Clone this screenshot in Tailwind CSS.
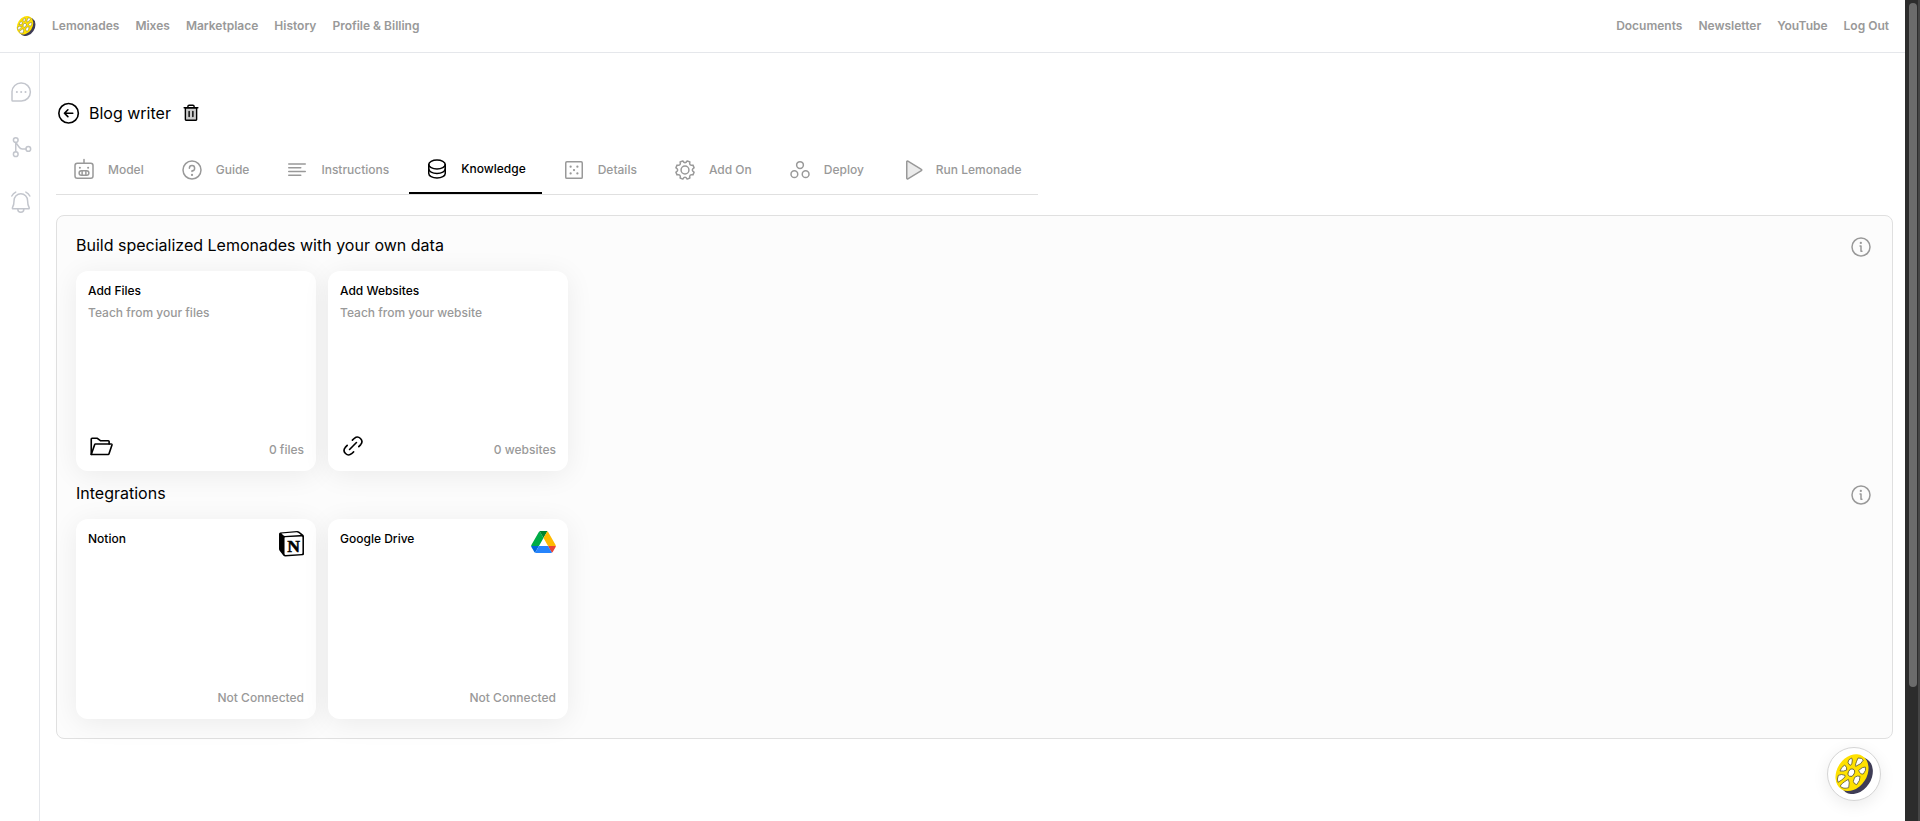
<!DOCTYPE html>
<html lang="en">
<head>
    <meta charset="UTF-8">
    <meta name="viewport" content="width=device-width, initial-scale=1.0">
    <title>Blog writer - Knowledge</title>
    <script src="https://cdn.jsdelivr.net/npm/@tailwindcss/browser@4"></script>
</head>
<body class="flex min-h-screen bg-white font-['Inter',sans-serif] text-xs font-medium text-black">
    <!-- Shared icons -->
    <svg class="hidden">
        <symbol id="lemon" viewBox="162 342 120 120">
            <ellipse cx="229" cy="407" rx="45" ry="59" transform="rotate(33 229 407)" fill="#3f3d56"/>
            <ellipse cx="216" cy="398" rx="45" ry="59" transform="rotate(33 216 398)" fill="#ffe100"/>
            <g fill="#fff" stroke="#5f5a30" stroke-width="2.5" stroke-linejoin="round">
                <ellipse cx="214" cy="398" rx="9" ry="12" transform="rotate(25 214 398)"/>
                <path d="M215 354Q204 358 204 367Q206 375 212 376Q217 372 217 360Z"/>
                <path d="M234 354Q246 353 250 360Q246 372 227 379Q224 376 234 354Z"/>
                <path d="M236 391Q248 380 256 381Q260 390 250 402Q240 404 236 391Z"/>
                <path d="M224 412Q232 406 240 409Q241 422 230 434Q221 432 220 424Z"/>
                <path d="M205 418Q210 426 206 443Q190 448 181 439Q181 432 205 418Z"/>
                <path d="M175 406Q184 401 195 406Q198 413 174 427Q170 418 175 406Z"/>
                <path d="M194 375Q202 382 200 390Q191 395 180 393Q183 382 194 375Z"/>
            </g>
        </symbol>
        <symbol id="info" viewBox="0 0 256 256">
            <g fill="none" stroke="currentColor" stroke-width="16" stroke-linecap="round" stroke-linejoin="round">
                <circle cx="128" cy="128" r="96"/>
                <path d="M118 118h10v56h10"/>
            </g>
            <circle cx="126" cy="84" r="12" fill="currentColor"/>
        </symbol>
    </svg>

    <div class="flex min-w-0 flex-1 flex-col">
        <header class="flex h-[53px] items-center justify-between border-b border-gray-200 px-4 font-semibold text-[#999]">
            <nav class="flex items-center gap-4">
                <a href="#" aria-label="Home"><svg class="size-5"><use href="#lemon"/></svg></a>
                <a href="#">Lemonades</a>
                <a href="#">Mixes</a>
                <a href="#">Marketplace</a>
                <a href="#">History</a>
                <a href="#">Profile &amp; Billing</a>
            </nav>
            <nav class="flex items-center gap-4">
                <a href="#">Documents</a>
                <a href="#">Newsletter</a>
                <a href="#">YouTube</a>
                <a href="#">Log Out</a>
            </nav>
        </header>

        <div class="flex flex-1">
            <aside class="flex w-10 shrink-0 flex-col gap-[31px] border-r border-gray-200 pt-[27px] pl-[9px] text-[#c3c6cd]">
                <a href="#" aria-label="Chats">
                    <svg class="size-6" viewBox="0 0 256 256" fill="none" stroke="currentColor" stroke-width="16" stroke-linecap="round" stroke-linejoin="round">
                        <path d="M132 224H40a8 8 0 0 1-8-8V124a96 96 0 0 1 96-92h4a96 96 0 0 1 0 192Z"/>
                        <path d="M84 128h.1M130 128h.1M176 128h.1" stroke-width="22"/>
                    </svg>
                </a>
                <a href="#" aria-label="Flows">
                    <svg class="size-6" viewBox="0 0 256 256" fill="none" stroke="currentColor" stroke-width="16" stroke-linecap="round" stroke-linejoin="round">
                        <circle cx="72" cy="54" r="25"/>
                        <circle cx="72" cy="204" r="25"/>
                        <circle cx="206" cy="148" r="25"/>
                        <path d="M72 79v100M72 79l37 52q12 17 32 17h40"/>
                    </svg>
                </a>
                <a href="#" aria-label="Notifications">
                    <svg class="size-6" viewBox="0 0 256 256" fill="none" stroke="currentColor" stroke-width="16" stroke-linecap="round" stroke-linejoin="round">
                        <path d="M54 112a72 72 0 0 1 144 0c0 38 9 61 17 75 3 5 0 13-7 13H44c-7 0-10-8-7-13 8-14 17-37 17-75Z"/>
                        <path d="M94 200v4a32 32 0 0 0 64 0v-4M180 22a96 96 0 0 1 42 42M30 64a96 96 0 0 1 42-42"/>
                    </svg>
                </a>
            </aside>

            <main class="min-w-0 flex-1 pt-12 pr-3 pb-20 pl-4">
                <div class="flex h-6 items-center">
                    <a href="#" aria-label="Back">
                        <svg class="size-[26px]" viewBox="0 0 256 256" fill="none" stroke="currentColor" stroke-width="16" stroke-linecap="round" stroke-linejoin="round">
                            <circle cx="124" cy="130" r="96"/>
                            <path d="M117 96l-34 34 34 34M83 130h82"/>
                        </svg>
                    </a>
                    <h1 class="ml-[7px] text-base font-normal">Blog writer</h1>
                    <button type="button" aria-label="Delete" class="ml-2.5">
                        <svg class="size-5" viewBox="0 0 256 256" fill="none" stroke="currentColor" stroke-width="18" stroke-linecap="round" stroke-linejoin="round">
                            <path d="M200 60v152a8 8 0 0 1-8 8H64a8 8 0 0 1-8-8V60Z" fill="currentColor" fill-opacity=".2"/>
                            <path d="M216 60H40M104 108v64M152 108v64M168 60V44a16 16 0 0 0-16-16h-48a16 16 0 0 0-16 16v16"/>
                        </svg>
                    </button>
                </div>

                <!-- Tabs -->
                <nav class="mt-[21px] flex w-fit gap-1 border-b border-[#e0e0e0] text-[#999]">
                    <a href="#" class="flex h-12 items-center gap-3 px-4">
                        <svg class="size-6" viewBox="0 0 256 256" fill="none" stroke="currentColor" stroke-width="16" stroke-linecap="round" stroke-linejoin="round">
                            <rect x="32" y="56" width="192" height="160" rx="24"/>
                            <rect x="76" y="136" width="104" height="48" rx="24"/>
                            <path d="M128 56V16M108 138v44M148 138v44"/>
                            <path d="M84 104h.1M172 104h.1" stroke-width="22"/>
                        </svg>
                        Model
                    </a>
                    <a href="#" class="flex h-12 items-center gap-3 px-4">
                        <svg class="size-6" viewBox="0 0 256 256" fill="none" stroke="currentColor" stroke-width="16" stroke-linecap="round" stroke-linejoin="round">
                            <circle cx="128" cy="128" r="96"/>
                            <path d="M128 144v-8a28 28 0 1 0-28-28"/>
                            <path d="M128 180h.1" stroke-width="24"/>
                        </svg>
                        Guide
                    </a>
                    <a href="#" class="flex h-12 items-center gap-3 px-4">
                        <svg class="size-6" viewBox="0 0 256 256" fill="none" stroke="currentColor" stroke-width="16" stroke-linecap="round">
                            <path d="M40 64h176M40 104h128M40 144h176M40 184h128"/>
                        </svg>
                        Instructions
                    </a>
                    <a href="#" aria-current="page" class="flex h-12 items-center gap-3 border-b-2 border-black px-4 text-black">
                        <svg class="size-6" viewBox="0 0 256 256" fill="none" stroke="currentColor" stroke-width="16" stroke-linecap="round" stroke-linejoin="round">
                            <ellipse cx="128" cy="80" rx="88" ry="48"/>
                            <path d="M40 80v48c0 26 39 48 88 48s88-22 88-48V80"/>
                            <path d="M40 128v48c0 26 39 48 88 48s88-22 88-48v-48"/>
                        </svg>
                        Knowledge
                    </a>
                    <a href="#" class="flex h-12 items-center gap-3 px-4">
                        <svg class="size-6" viewBox="0 0 256 256" fill="none" stroke="currentColor" stroke-width="16" stroke-linecap="round">
                            <rect x="40" y="40" width="176" height="176" rx="12"/>
                            <path d="M92 92h.1M164 92h.1M128 128h.1M92 164h.1M164 164h.1" stroke-width="24"/>
                        </svg>
                        Details
                    </a>
                    <a href="#" class="flex h-12 items-center gap-3 px-4">
                        <svg class="size-6" viewBox="0 0 256 256" fill="none" stroke="currentColor" stroke-width="16" stroke-linejoin="round">
                            <circle cx="128" cy="128" r="42"/>
                            <path d="M225 151L213 180Q192 174 183 183Q174 192 180 213L151 225Q141 206 128 206Q115 206 105 225L76 213Q82 192 73 183Q64 174 43 180L31 151Q50 141 50 128Q50 115 31 105L43 76Q64 82 73 73Q82 64 76 43L105 31Q115 50 128 50Q141 50 151 31L180 43Q174 64 183 73Q192 82 213 76L225 105Q206 115 206 128Q206 141 225 151Z"/>
                        </svg>
                        Add On
                    </a>
                    <a href="#" class="flex h-12 items-center gap-3 px-4">
                        <svg class="size-6" viewBox="0 0 256 256" fill="none" stroke="currentColor" stroke-width="16">
                            <circle cx="128" cy="75" r="36"/>
                            <circle cx="68" cy="172" r="36"/>
                            <circle cx="188" cy="172" r="36"/>
                        </svg>
                        Deploy
                    </a>
                    <a href="#" class="flex h-12 items-center gap-3 px-4">
                        <svg class="size-6" viewBox="0 0 256 256" fill="none" stroke="currentColor" stroke-width="16" stroke-linejoin="round">
                            <path d="M72 40v176a8 8 0 0 0 12 6l144-87a8 8 0 0 0 0-14L84 33a8 8 0 0 0-12 7Z" fill="currentColor" fill-opacity=".2"/>
                        </svg>
                        Run Lemonade
                    </a>
                </nav>

                <!-- Knowledge sources -->
                <div class="mt-5 flex flex-col gap-3 rounded-lg border border-[#e0e0e0] bg-[#fcfcfc] p-[19px]">
                    <div class="flex items-start justify-between">
                        <h2 class="text-base leading-5 font-normal">Build specialized Lemonades with your own data</h2>
                        <button type="button" aria-label="About knowledge" class="text-[#999]"><svg class="size-6"><use href="#info"/></svg></button>
                    </div>
                    <div class="flex flex-wrap gap-3">
                        <a href="#" class="flex h-[200px] w-60 flex-col justify-between rounded-xl bg-white p-3 shadow-[0_4px_28px_rgba(0,0,0,0.07)]">
                            <div class="flex flex-col gap-1.5">
                                <h3>Add Files</h3>
                                <p class="text-[#999]">Teach from your files</p>
                            </div>
                            <div class="flex items-end justify-between">
                                <svg class="size-[26px]" viewBox="0 0 256 256" fill="none" stroke="currentColor" stroke-width="16" stroke-linecap="round" stroke-linejoin="round">
                                    <path d="M32 212V60a8 8 0 0 1 8-8h52l30 24h78a8 8 0 0 1 8 8v24"/>
                                    <path d="M32 212l34-99a8 8 0 0 1 8-5h154a8 8 0 0 1 8 10l-30 89a8 8 0 0 1-8 5Z"/>
                                </svg>
                                <span class="leading-[18px] text-[#999]">0 files</span>
                            </div>
                        </a>
                        <a href="#" class="flex h-[200px] w-60 flex-col justify-between rounded-xl bg-white p-3 shadow-[0_4px_28px_rgba(0,0,0,0.07)]">
                            <div class="flex flex-col gap-1.5">
                                <h3>Add Websites</h3>
                                <p class="text-[#999]">Teach from your website</p>
                            </div>
                            <div class="flex items-end justify-between">
                                <svg class="size-[26px]" viewBox="0 0 256 256" fill="none" stroke="currentColor" stroke-width="16" stroke-linecap="round" stroke-linejoin="round">
                                    <path d="M94 162l68-68"/>
                                    <path d="M134 185l-20 19a44 44 0 0 1-62-62l19-20"/>
                                    <path d="M185 134l19-20a44 44 0 0 0-62-62l-20 19"/>
                                </svg>
                                <span class="leading-[18px] text-[#999]">0 websites</span>
                            </div>
                        </a>
                    </div>
                    <div class="flex items-start justify-between">
                        <h2 class="text-base leading-5 font-normal">Integrations</h2>
                        <button type="button" aria-label="About integrations" class="text-[#999]"><svg class="size-6"><use href="#info"/></svg></button>
                    </div>
                    <div class="flex flex-wrap gap-3">
                        <a href="#" class="flex h-[200px] w-60 flex-col justify-between rounded-xl bg-white p-3 shadow-[0_4px_28px_rgba(0,0,0,0.07)]">
                            <div class="flex items-start justify-between">
                                <h3>Notion</h3>
                                <svg class="h-[26px] w-[25px]" viewBox="0 0 24 25">
                                    <path d="M1.2 1.4L17.5.1q1 0 1.800.5l4 2.900q.7.6.7 1.500v17q0 1.200-1.200 1.300L6 24.500q-1 0-1.700-.8L.8 19.300Q0 18.300 0 17.300V3Q0 1.600 1.200 1.400Z"/>
                                    <path d="M2.300 2.400L17 1.300q.8 0 1.300.4l2.500 1.700q-.2.400-.6.4L5.500 4.700q-.6 0-1.100-.4Z" fill="#fff"/>
                                    <path d="M5.800 6.100L21.600 5.200q.9 0 .9.800v15.200q0 .8-.9.900l-15.400.9q-.9 0-.9-.8V7q0-.9.500-.9Z" fill="#fff"/>
                                    <text x="14" y="20" text-anchor="middle" font-family="Liberation Serif, serif" font-weight="700" font-size="17" stroke="#000" stroke-width=".5">N</text>
                                </svg>
                            </div>
                            <span class="text-right leading-[18px] text-[#999]">Not Connected</span>
                        </a>
                        <a href="#" class="flex h-[200px] w-60 flex-col justify-between rounded-xl bg-white p-3 shadow-[0_4px_28px_rgba(0,0,0,0.07)]">
                            <div class="flex items-start justify-between">
                                <h3>Google Drive</h3>
                                <svg class="h-[22px] w-[25px]" viewBox="0 0 87.3 78">
                                    <path d="m6.600 66.850 3.850 6.650c.8 1.400 1.950 2.500 3.300 3.300l13.750-23.800h-27.500c0 1.550.4 3.100 1.200 4.500z" fill="#0066da"/>
                                    <path d="m43.650 25-13.750-23.800c-1.350.8-2.500 1.900-3.300 3.300l-25.400 44a9.060 9.060 0 0 0-1.200 4.500h27.500z" fill="#00ac47"/>
                                    <path d="m73.550 76.800c1.350-.8 2.500-1.900 3.300-3.300l1.600-2.750 7.650-13.250c.8-1.400 1.200-2.950 1.200-4.500h-27.500l5.850 11.500z" fill="#ea4335"/>
                                    <path d="m43.650 25 13.750-23.800c-1.350-.8-2.900-1.200-4.500-1.200h-18.500c-1.600 0-3.150.45-4.500 1.200z" fill="#00832d"/>
                                    <path d="m59.800 53h-32.300l-13.750 23.800c1.350.8 2.900 1.200 4.500 1.200h50.800c1.600 0 3.150-.45 4.500-1.200z" fill="#2684fc"/>
                                    <path d="m73.400 26.500-12.700-22c-.8-1.400-1.950-2.500-3.300-3.300l-13.750 23.800 16.150 28h27.450c0-1.550-.4-3.100-1.200-4.500z" fill="#ffba00"/>
                                </svg>
                            </div>
                            <span class="text-right leading-[18px] text-[#999]">Not Connected</span>
                        </a>
                    </div>
                </div>
            </main>
        </div>
    </div>

    <!-- Scroll track -->
    <div class="w-[15px] shrink-0 border-r-2 border-[#454545] bg-[#2c2c2c] pt-[3px] pl-1">
        <div class="h-[calc(100vh/6*5)] w-2 rounded-full bg-[#6b6b6b]"></div>
    </div>

    <!-- Chat launcher -->
    <button type="button" aria-label="Open chat" class="fixed right-[39px] bottom-5 flex size-[54px] items-center justify-center rounded-full border border-[#d4d4d4] bg-white shadow-[0_4px_16px_rgba(0,0,0,0.08)]">
        <svg class="size-10"><use href="#lemon"/></svg>
    </button>
</body>
</html>
